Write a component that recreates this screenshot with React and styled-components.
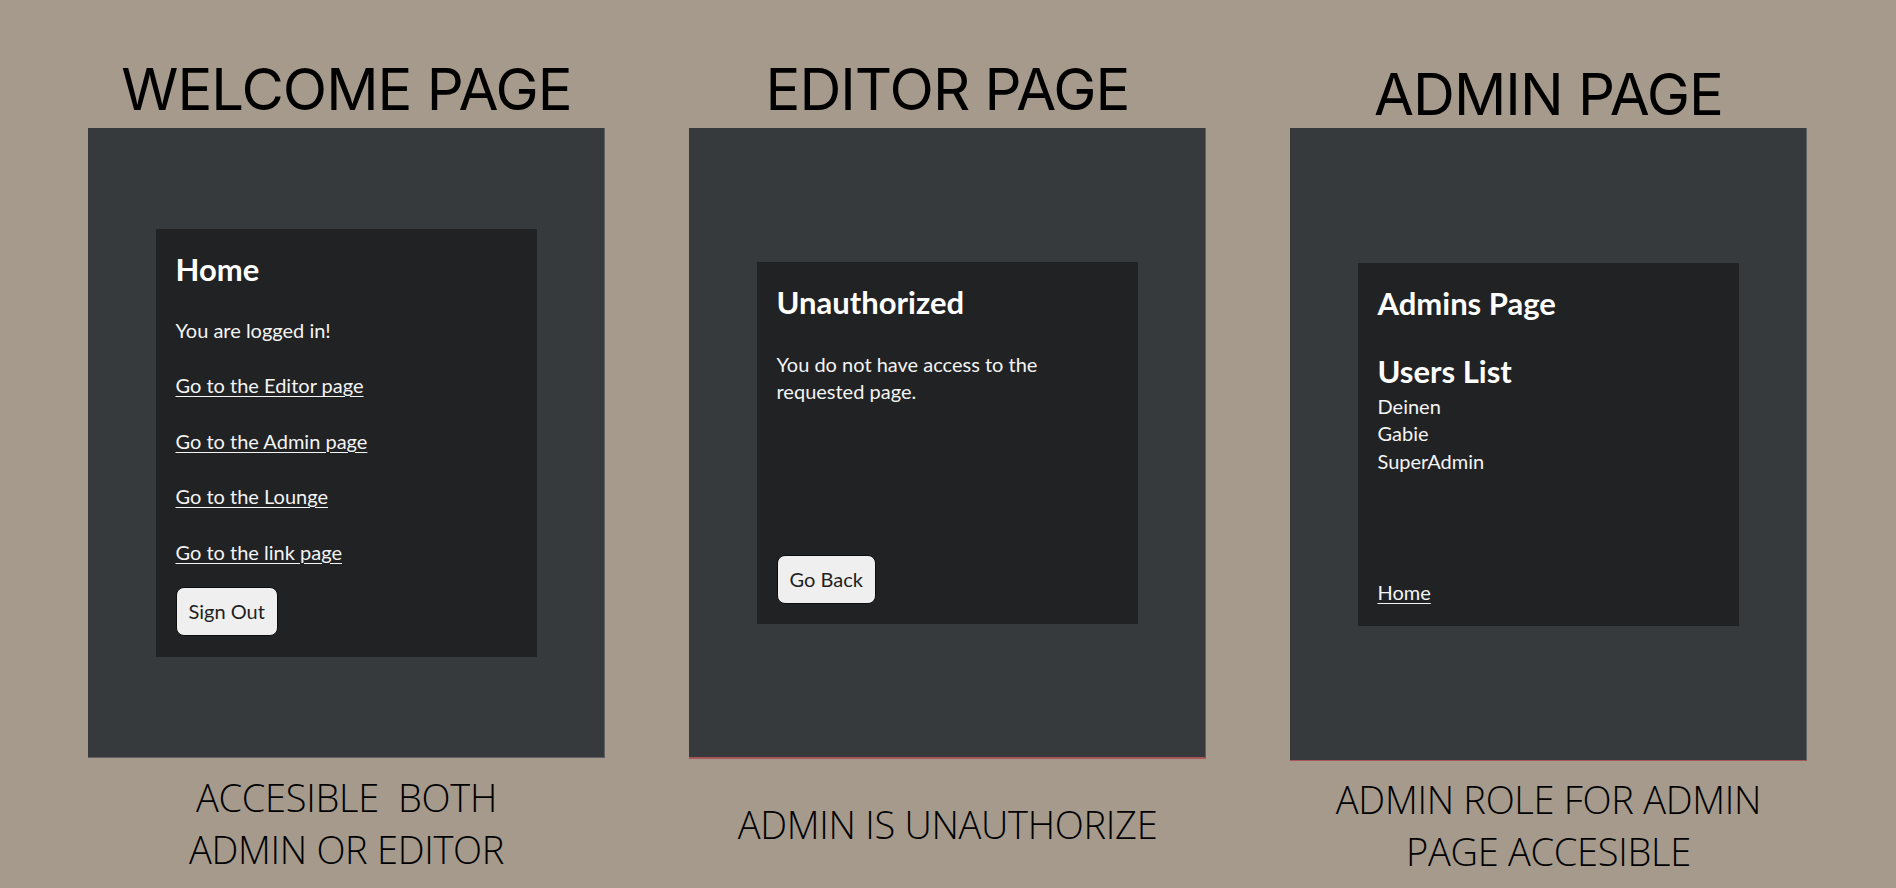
import React from 'react'
import styled, { createGlobalStyle } from 'styled-components'

const GlobalStyle = createGlobalStyle`
  html, body {
    margin: 0;
    padding: 0;
    background: #a59a8b;
  }
  body {
    height: 888px;
    overflow: hidden;
  }
  * {
    box-sizing: border-box;
  }
`

const Page = styled.main`
  display: flex;
  gap: 84px;
  padding: 0 89px 0 88px;
  height: 888px;
`

const Column = styled.section`
  width: 517px;
  display: flex;
  flex-direction: column;
`

const Title = styled.h2`
  margin: 0;
  height: 128px;
  padding-top: ${props => props.offset}px;
  font-family: Inter, "Liberation Sans", sans-serif;
  font-weight: 400;
  font-size: 58px;
  line-height: 58px;
  text-align: center;
  color: #000;
  letter-spacing: -1px;
`

const Panel = styled.div`
  height: ${props => props.height}px;
  background: #373a3d;
  display: flex;
  align-items: center;
  justify-content: center;
  border-right: 1px solid #5f6062;
  border-bottom: ${props => props.edge};
`

const Card = styled.div`
  width: 381px;
  min-height: ${props => props.minHeight || 0}px;
  background: #212224;
  padding: 24px 20px ${props => props.bottom}px;
  display: flex;
  flex-direction: column;
  align-items: flex-start;
  font-family: Lato, "Open Sans", sans-serif;
  font-size: 20px;
  color: #f4f4f4;
`

const Heading = styled.h1`
  margin: ${props => props.space || 0}px 0 0;
  font-size: 31px;
  line-height: 32px;
  font-weight: 700;
  color: #fff;
`

const Text = styled.p`
  margin: ${props => props.space || 0}px 0 0;
  line-height: ${props => props.lh || 28}px;
`

const Link = styled.a`
  display: block;
  margin-top: ${props => (props.bottom ? 'auto' : `${props.space || 0}px`)};
  line-height: 28px;
  color: #f4f4f4;
  text-decoration: underline;
  text-underline-offset: 3px;
  text-decoration-thickness: 1px;
  cursor: pointer;
`

const Button = styled.button`
  margin-top: ${props => (props.bottom ? 'auto' : `${props.space || 0}px`)};
  height: 49px;
  padding: 0 12px;
  background: #efefef;
  border: 1px solid #0d0d0d;
  border-radius: 8px;
  font-family: Lato, "Open Sans", sans-serif;
  font-size: 20px;
  color: #1e1e1e;
  cursor: pointer;
`

const UserList = styled.ul`
  list-style: none;
  margin: 6px 0 0;
  padding: 0;
  line-height: 27.5px;
`

const Caption = styled.p`
  flex: 1;
  margin: 0;
  display: flex;
  align-items: center;
  justify-content: center;
  text-align: center;
  font-family: "Open Sans", "Liberation Sans", sans-serif;
  font-weight: 300;
  font-size: 38px;
  letter-spacing: -0.3px;
  line-height: 52px;
  color: #000;
  white-space: pre-line;
`

const users = ['Deinen', 'Gabie', 'SuperAdmin']

export default function App() {
  return (
    <>
      <GlobalStyle />
      <Page>
        <Column>
          <Title offset={60}>WELCOME PAGE</Title>
          <Panel height={630} edge="1px solid #5f6062">
            <Card bottom={21}>
              <Heading>Home</Heading>
              <Text space={31}>You are logged in!</Text>
              <Link space={27.5}>Go to the Editor page</Link>
              <Link space={27.5}>Go to the Admin page</Link>
              <Link space={27.5}>Go to the Lounge</Link>
              <Link space={27.5}>Go to the link page</Link>
              <Button space={21}>Sign Out</Button>
            </Card>
          </Panel>
          <Caption>{'ACCESIBLE\u00a0\u00a0BOTH\nADMIN OR EDITOR'}</Caption>
        </Column>

        <Column>
          <Title offset={60}>EDITOR PAGE</Title>
          <Panel height={631} edge="2px solid #a8565a">
            <Card bottom={20} minHeight={362}>
              <Heading>Unauthorized</Heading>
              <Text space={33} lh={27}>You do not have access to the requested page.</Text>
              <Button bottom>Go Back</Button>
            </Card>
          </Panel>
          <Caption>ADMIN IS UNAUTHORIZE</Caption>
        </Column>

        <Column>
          <Title offset={65}>ADMIN PAGE</Title>
          <Panel height={633} edge="1px solid #a8565a">
            <Card bottom={20} minHeight={363}>
              <Heading>Admins Page</Heading>
              <Heading space={36}>Users List</Heading>
              <UserList>
                {users.map(name => (
                  <li key={name}>{name}</li>
                ))}
              </UserList>
              <Link bottom>Home</Link>
            </Card>
          </Panel>
          <Caption>{'ADMIN ROLE FOR ADMIN\nPAGE ACCESIBLE'}</Caption>
        </Column>
      </Page>
    </>
  )
}
